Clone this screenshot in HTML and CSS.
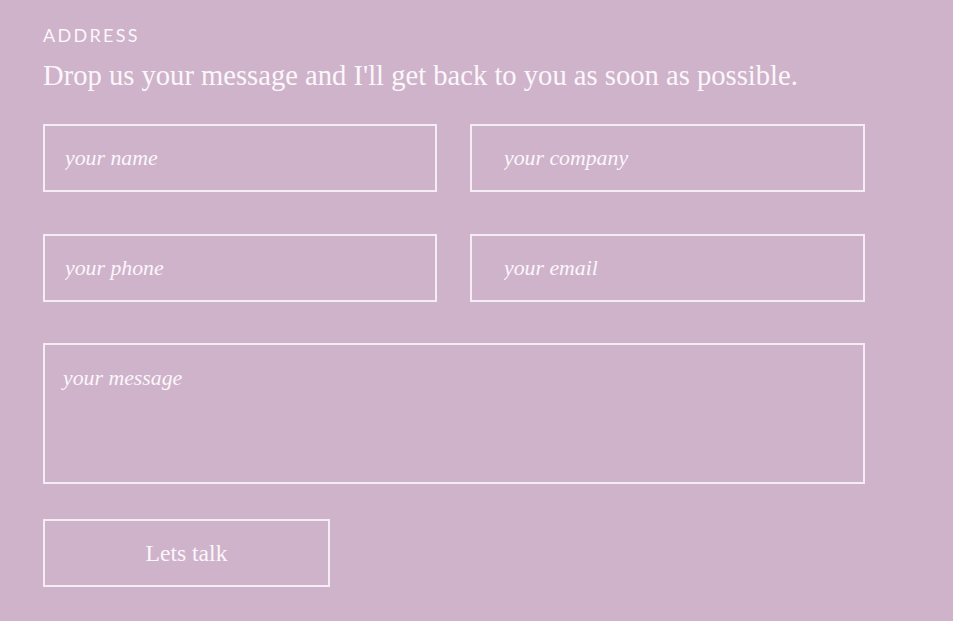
FILE: index.html
```html
<!DOCTYPE html>
<html lang="en">
<head>
<meta charset="utf-8">
<title>Contact</title>
<link rel="stylesheet" href="styles.css">
</head>
<body>
<section class="contact">
  <h2 class="eyebrow">ADDRESS</h2>
  <p class="lead">Drop us your message and I'll get back to you as soon as possible.</p>
  <form class="form">
    <div class="grid">
      <input class="field" type="text" placeholder="your name">
      <input class="field field-right" type="text" placeholder="your company">
      <input class="field" type="text" placeholder="your phone">
      <input class="field field-right" type="text" placeholder="your email">
    </div>
    <textarea class="field message" placeholder="your message"></textarea>
    <button class="submit" type="button">Lets talk</button>
  </form>
</section>
</body>
</html>
```
FILE: styles.css
```css
html, body {
  margin: 0;
  padding: 0;
}
body {
  background: #cfb3cb;
  width: 953px;
  height: 621px;
  overflow: hidden;
}
.contact {
  padding: 25px 0 0 43px;
  width: 822px;
}
.eyebrow {
  margin: 0;
  font-family: "Lato", "Inter", sans-serif;
  font-weight: 400;
  font-size: 18px;
  letter-spacing: 2.3px;
  line-height: 20px;
  color: #fbf7fa;
}
.lead {
  margin: 13px 0 0;
  font-family: "Liberation Serif", serif;
  font-size: 28.6px;
  line-height: 36px;
  color: #fbf7fa;
}
.form {
  margin-top: 30px;
  display: flex;
  flex-direction: column;
}
.grid {
  display: grid;
  grid-template-columns: 394px 395px;
  column-gap: 33px;
  row-gap: 42px;
}
.field {
  box-sizing: border-box;
  height: 68px;
  margin: 0;
  background: transparent;
  border: 2px solid #f5edf4;
  border-radius: 0;
  padding: 0 20px;
  font-family: "Liberation Serif", serif;
  font-style: italic;
  font-size: 21.8px;
  color: #fff;
  outline: none;
}
.field-right {
  padding-left: 32px;
}
.field::placeholder {
  color: #fbf7fa;
  opacity: 1;
}
.message {
  margin-top: 41px;
  width: 822px;
  height: 141px;
  padding: 20px 18px;
  resize: none;
  display: block;
  line-height: 26px;
}
.submit {
  box-sizing: border-box;
  margin-top: 35px;
  width: 287px;
  height: 68px;
  background: transparent;
  border: 2px solid #f5edf4;
  border-radius: 0;
  font-family: "Liberation Serif", serif;
  font-size: 23.6px;
  color: #fbf7fa;
  cursor: pointer;
}
```
